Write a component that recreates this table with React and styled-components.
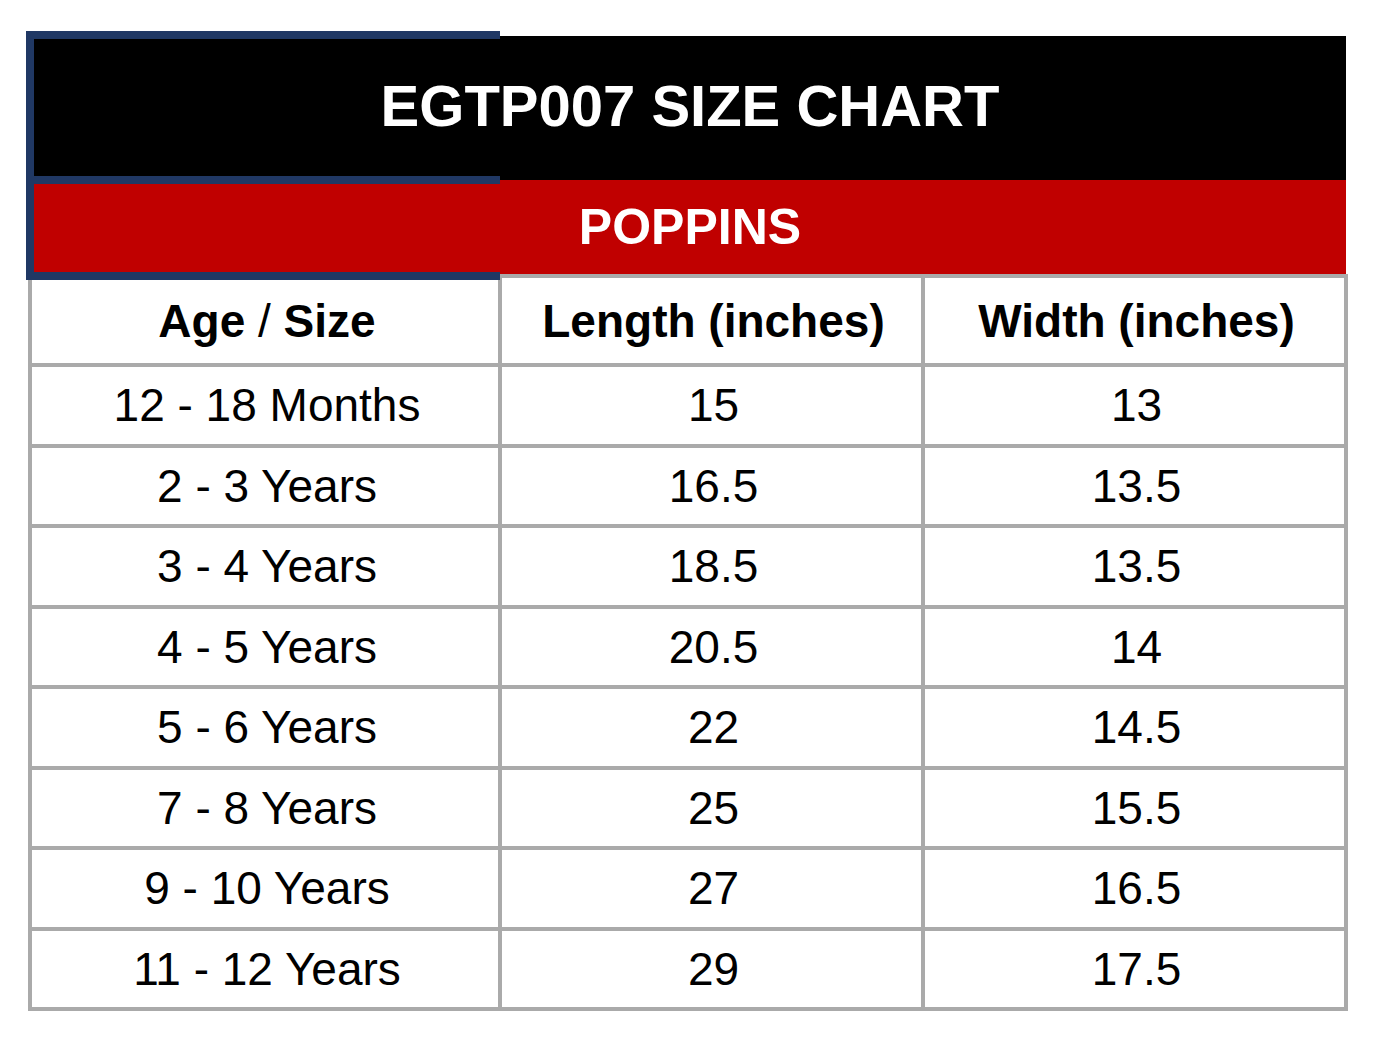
import React from 'react';
import styled, { createGlobalStyle } from 'styled-components';

const rows = [
  ['12 - 18 Months', '15', '13'],
  ['2 - 3 Years', '16.5', '13.5'],
  ['3 - 4 Years', '18.5', '13.5'],
  ['4 - 5 Years', '20.5', '14'],
  ['5 - 6 Years', '22', '14.5'],
  ['7 - 8 Years', '25', '15.5'],
  ['9 - 10 Years', '27', '16.5'],
  ['11 - 12 Years', '29', '17.5'],
];

const App = () => {
  return (
    <>
      <GlobalStyle />
      <Page>
        <Sheet>
          <Banner bg='#000' height='144px' size='58px' shift='6px'>
            EGTP007 SIZE CHART
          </Banner>
          <Banner bg='#c00000' height='94px' size='50px'>
            POPPINS
          </Banner>
          <Grid>
            <Cell head>
              Age&nbsp;<Slash>/</Slash>&nbsp;Size
            </Cell>
            <Cell head>Length (inches)</Cell>
            <Cell head>Width (inches)</Cell>
            {rows.map((row) =>
              row.map((value, i) => <Cell key={row[0] + i}>{value}</Cell>)
            )}
          </Grid>
          <SelectionFrame>
            <SelectionBar />
          </SelectionFrame>
        </Sheet>
      </Page>
    </>
  );
};

const GlobalStyle = createGlobalStyle`
  html, body {
    margin: 0;
    background: #fff;
  }
  body {
    font-family: 'Liberation Sans', Arial, Helvetica, sans-serif;
  }
`;

const Page = styled.div`
  width: 1382px;
  height: 1044px;
  box-sizing: border-box;
  padding: 36px 0 0 28px;
`;

const Sheet = styled.div`
  position: relative;
  width: 1320px;
`;

const Banner = styled.div`
  display: flex;
  align-items: center;
  justify-content: center;
  margin-left: -2px;
  padding-left: 8px;
  padding-bottom: ${(props) => props.shift || '0'};
  box-sizing: border-box;
  width: 1320px;
  height: ${(props) => props.height};
  background-color: ${(props) => props.bg};
  color: #fff;
  font-weight: 700;
  font-size: ${(props) => props.size};
`;

const Grid = styled.div`
  display: grid;
  grid-template-columns: 466px 419px 419px;
  grid-template-rows: 85px;
  grid-auto-rows: 76.5px;
  gap: 4px;
  padding: 4px;
  background-color: #aaaaaa;
`;

const Cell = styled.div`
  display: flex;
  align-items: center;
  justify-content: center;
  padding-left: 4px;
  background-color: #fff;
  color: #000;
  font-size: 46px;
  font-weight: ${(props) => (props.head ? 700 : 400)};
  white-space: nowrap;
`;

const Slash = styled.span`
  font-weight: 400;
`;

const SelectionFrame = styled.div`
  position: absolute;
  left: -2px;
  top: -5px;
  width: 474px;
  height: 249px;
  box-sizing: border-box;
  border: 8px solid #203864;
  border-right: none;
  pointer-events: none;
`;

const SelectionBar = styled.div`
  position: absolute;
  left: 0;
  right: 0;
  top: 137px;
  height: 8px;
  background-color: #203864;
`;

export default App;
